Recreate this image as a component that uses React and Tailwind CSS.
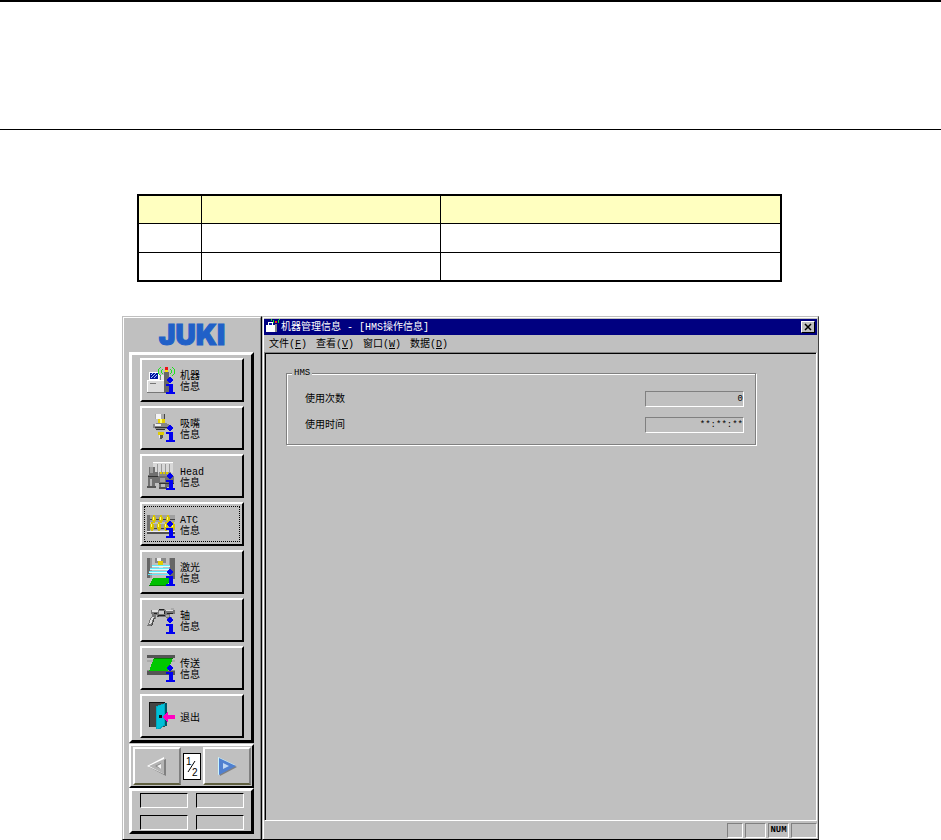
import React from "react";

function InfoMark() {
  return (
    <g fill="#0000f0">
      <path d="M22 11h2v1h1v1h1v2h-1v1h-1v1h-2v-1h-1v-1h-1v-2h1v-1h1z" />
      <path d="M19 18h7v8h2v2h-9v-2h3v-6h-3z" />
    </g>
  );
}

function Icon({ children, info = true }) {
  return (
    <svg
      width="28"
      height="28"
      viewBox="0 0 28 28"
      shapeRendering="crispEdges"
      aria-hidden="true"
      className="shrink-0 overflow-visible"
    >
      {children}
      {info && <InfoMark />}
    </svg>
  );
}

function MachineIcon() {
  return (
    <Icon>
      <path d="M2 6h10v9H2z" fill="#fff" />
      <path d="M3 7h8v6H3z" fill="#0018a0" />
      <path d="M4 12l5-5M4 9l2-2M7 12l3-3" stroke="#a8c0ff" strokeWidth="1" />
      <path d="M12 9h5v5h-5z" fill="#e8e8e8" />
      <path d="M13 10h1v4h-1z" fill="#888" />
      <path d="M0 15h18v12H0z" fill="#dcdcdc" />
      <path d="M0 14h17v1H0zM0 14h1v13H0z" fill="#fff" />
      <path d="M3 17h6v1H3zM0 26h18v1H0z" fill="#777" />
      <path d="M17 6h5v21h-5z" fill="#686868" />
      <path d="M18 4h3v2h-3z" fill="#ffe000" />
      <path d="M18 1h3v3h-3z" fill="#f01010" />
      <path
        d="M15 3h1v1h-1v3h1v1h-1v-1h-1V4h1zM13 1h1v1h-1v1h-1v5h1v1h1v1h-1v-1h-1v-1h-1V3h1V2h1zM23 3h1v1h1v3h-1v1h-1V7h1V4h-1zM25 1h1v1h1v1h1v5h-1v1h-1v1h-1V9h1V8h1V3h-1V2h-1z"
        fill="#20e020"
      />
    </Icon>
  );
}

function NozzleIcon() {
  return (
    <Icon>
      <path d="M8 0h10v5H8z" fill="#aaa" />
      <path d="M9 0h5v5H9z" fill="#f4f4f4" />
      <path d="M17 0h1v6h-1z" fill="#444" />
      <path d="M11 5h7v4h-7z" fill="#e8d000" />
      <path d="M13 5h2v4h-2z" fill="#ffff70" />
      <path d="M6 10h3V9h11v1h2v4h-2v1H8v-1H6z" fill="#888" />
      <path d="M8 10h6v2H8z" fill="#eee" />
      <path d="M8 13h12v1H8zM9 15h9v1H9z" fill="#333" />
      <path d="M9 16h10v1h-2v1h-6v-1H9z" fill="#b8b8b8" />
      <path d="M11 18h6v3h-6z" fill="#e0cc00" />
      <path d="M12 21h4v3h-1v1h-2v-1h-1z" fill="#555" />
      <path d="M12 21h1v3h-1z" fill="#eee" />
    </Icon>
  );
}

function HeadIcon() {
  return (
    <Icon>
      <path d="M6 0h20v11H6z" fill="#d8d8d8" />
      <path d="M6 0h20v1H6z" fill="#fff" />
      <path d="M10 2h1v8h-1zM14 2h1v9h-1zM18 2h1v9h-1zM22 2h1v8h-1z" fill="#999" />
      <path d="M2 5h6v5h3v4h16v7h-3v4H12v-4H8v4H1V13h1z" fill="#707070" />
      <path d="M12 10h12v4H12z" fill="#888" />
      <path d="M13 10h2v2h-2zM16 10h2v2h-2zM19 10h2v2h-2z" fill="#e0cc00" />
      <path d="M3 5h3v6H3zM13 16h5v4h-5z" fill="#a0a0a0" />
      <path d="M1 14h10v1H1zM12 21h15v1H12z" fill="#333" />
      <path d="M3 17h2v7H3zM14 22h4v4h-4z" fill="#b8b8b8" />
      <path d="M0 24h9v2H0zM12 25h8v2h-8z" fill="#555" />
    </Icon>
  );
}

function AtcIcon() {
  const upper = [5, 12, 19];
  const lower = [3, 10, 17, 24];
  return (
    <Icon>
      <path d="M1 5h27v7H1zM0 14h28v6H0z" fill="#a0a0a0" />
      <path d="M1 9h27v1H1zM0 18h28v1H0z" fill="#444" />
      <path d="M0 5h3v19H0z" fill="#707070" />
      <path d="M0 22h28v2H0z" fill="#505050" />
      <path d="M0 21h28v1H0z" fill="#eee" />
      {upper.map((x) => (
        <g key={x} transform={`translate(${x} 5)`}>
          <path d="M1 0h2v2h1v4h-1v2h-2v-2h-1v-4h1z" fill="#d8c400" />
          <path d="M1 2h1v3h-1z" fill="#ffff70" />
        </g>
      ))}
      {lower.map((x) => (
        <g key={x} transform={`translate(${x} 12)`}>
          <path d="M1 0h2v2h1v5h-1v2h-2v-2h-1v-5h1z" fill="#d8c400" />
          <path d="M1 2h1v3h-1z" fill="#ffff70" />
        </g>
      ))}
    </Icon>
  );
}

function LaserIcon() {
  return (
    <Icon>
      <path d="M0 0h5v20H0zM22 0h6v21h-6z" fill="#666" />
      <path d="M3 0h2v20H3zM22 0h1v21h-1z" fill="#999" />
      <path d="M8 0h11v5H8z" fill="#888" />
      <path d="M10 0h4v3h-4z" fill="#eee" />
      <path d="M11 3h5v4h-5z" fill="#e0cc00" />
      <path d="M12 9h4v2h-4z" fill="#ddd" />
      <path d="M5 7h18v1H5zM3 10h19v1H3zM2 13h21v1H2zM1 16h23v1H1z" fill="#60e8f8" />
      <path d="M5 8h18v1H5zM3 11h19v1H3zM2 14h21v1H2z" fill="#d8ffff" />
      <path d="M6 20h18l-4 8H2z" fill="#00c000" />
      <path d="M2 27h19v1H2z" fill="#008000" />
    </Icon>
  );
}

function AxisIcon() {
  return (
    <Icon>
      <path d="M4 4h8V3h6v1h10v4h-5v3h2v3h-3l-4-3h-8v-2H9v4H7l-3 7H0l4-9h1V8H4z" fill="#777" />
      <path d="M5 4h6v2H5zM19 4h7v1h-7zM5 11h2l-3 7H2z" fill="#e0e0e0" />
      <path d="M12 5h5v3h-5z" fill="#ccc" />
      <path d="M12 3h5v1h-5zM11 9h7v1h-7zM20 7h6v1h-6zM7 7h3v1H7zM17 5h1v3h-1z" fill="#222" />
      <path d="M7 12h1l-3 8H4zM10 10h2v1h-2z" fill="#444" />
      <path d="M24 2h3v2h-3zM19 9h3v2h-3z" fill="#aaa" />
    </Icon>
  );
}

function ConveyorIcon() {
  return (
    <Icon>
      <path d="M0 1h28v3H0zM0 17h28v4H0z" fill="#555" />
      <path d="M0 6h28v2H0z" fill="#aaa" />
      <path d="M0 16h28v1H0z" fill="#888" />
      <path d="M7 4h19l-5 13H2z" fill="#00c800" />
      <path d="M7 4h19v1H7z" fill="#008000" />
    </Icon>
  );
}

function ExitIcon() {
  return (
    <Icon info={false}>
      <path d="M2 0h16v25H2z" fill="#444" />
      <path d="M2 0h1v25H2zM2 0h16v1H2z" fill="#111" />
      <path d="M9 4l9-3h2v23h-3l-4 3H9z" fill="#00a8c0" />
      <path d="M10 5l7-3v21l-7 4z" fill="#00c0d8" />
      <path d="M18 1h2v23h-2z" fill="#005868" />
      <path d="M12 13h3v3h-3z" fill="#111" />
      <path d="M15 15l6-6v4h7v4h-7v4z" fill="#ff00c0" />
    </Icon>
  );
}

const sections = [
  { top: "机器", bottom: "信息", Icon: MachineIcon },
  { top: "吸嘴", bottom: "信息", Icon: NozzleIcon },
  { top: "Head", bottom: "信息", Icon: HeadIcon },
  { top: "ATC", bottom: "信息", Icon: AtcIcon, focused: true },
  { top: "激光", bottom: "信息", Icon: LaserIcon },
  { top: "轴", bottom: "信息", Icon: AxisIcon },
  { top: "传送", bottom: "信息", Icon: ConveyorIcon },
  { top: "退出", Icon: ExitIcon },
];

const menus = [
  ["文件", "F"],
  ["查看", "V"],
  ["窗口", "W"],
  ["数据", "D"],
];

function SideButton({ item }) {
  const Glyph = item.Icon;
  return (
    <button
      type="button"
      className="flex h-11 w-full items-stretch border-2 border-t-white border-r-black border-b-black border-l-white bg-[#c0c0c0] p-[2px] text-left"
    >
      <span
        className={
          item.focused
            ? "flex flex-1 items-center gap-[5px] border border-dotted border-black pl-[2px]"
            : "flex flex-1 items-center gap-[5px] border border-transparent pl-[2px]"
        }
      >
        <Glyph />
        <span className="flex flex-col pt-1 text-[10px] leading-[11px]">
          <span>{item.top}</span>
          {item.bottom && <span>{item.bottom}</span>}
        </span>
      </span>
    </button>
  );
}

function Sidebar() {
  return (
    <aside className="w-[140px] shrink-0 border-y border-r border-l border-t-[#c0c0c0] border-r-black border-b-black border-l-[#c0c0c0]">
      <div className="h-full border-t border-r border-l border-t-white border-r-[#808080] border-l-white pr-[6px] pl-[5px]">
        <div className="flex h-[34px] items-center justify-center">
          <svg width="120" height="34" viewBox="0 0 120 34" role="img" aria-label="JUKI">
            <text
              x="60"
              y="27"
              textAnchor="middle"
              fill="#2060c8"
              stroke="#2060c8"
              strokeWidth="1"
              className="font-['Inter',sans-serif] text-[28px] font-black"
            >
              JUKI
            </text>
          </svg>
        </div>
        <nav className="flex flex-col gap-1 border-[3px] border-t-white border-r-black border-b-black border-l-white pt-[3px] pr-[7px] pb-[2px] pl-2">
          {sections.map((item) => (
            <SideButton key={item.top} item={item} />
          ))}
        </nav>
        <div className="mt-px flex h-11 items-center justify-between border-2 border-t-white border-r-black border-b-black border-l-white pr-px pl-[2px]">
          <button
            type="button"
            aria-label="上一页"
            className="flex h-[38px] w-12 items-center justify-center border-2 border-t-white border-r-[#808080] border-b-[#606040] border-l-white bg-[#c0c0c0]"
          >
            <svg width="22" height="22" viewBox="0 0 22 22" aria-hidden="true">
              <path d="M3 12L20 4v17z" fill="#808080" />
              <path d="M1 11L18 2v17z" fill="#fff" />
              <path d="M3 11L18 4v15z" fill="#b4b4b4" />
              <path d="M9 11l6-3v6z" fill="#888" />
              <path d="M11 11l4-2v5z" fill="#f4f4f4" />
            </svg>
          </button>
          <span className="flex h-[27px] w-[18px] items-center justify-center border border-black bg-white">
            <svg width="16" height="25" viewBox="0 0 16 25" role="img" aria-label="1/2">
              <path d="M11 7L4 18" stroke="#000" />
              <text x="2" y="11" className="font-['Liberation_Sans',sans-serif] text-[10px]">1</text>
              <text x="8" y="22" className="font-['Liberation_Sans',sans-serif] text-[10px]">2</text>
            </svg>
          </span>
          <button
            type="button"
            aria-label="下一页"
            className="flex h-[38px] w-12 items-center justify-center border-2 border-t-white border-r-[#808080] border-b-[#606040] border-l-white bg-[#c0c0c0]"
          >
            <svg width="22" height="22" viewBox="0 0 22 22" aria-hidden="true">
              <path d="M4 4l17 8-17 9z" fill="#808080" />
              <path d="M2 2l17 8-17 10z" fill="#c8f4ff" />
              <path d="M3 3l17 8-17 9z" fill="#5080d0" />
              <path d="M7 8l6 3-6 3z" fill="#c0d8f4" />
            </svg>
          </button>
        </div>
        <div className="grid h-[46px] grid-cols-2 content-start gap-x-2 gap-y-[7px] border-[3px] border-t-white border-r-black border-b-black border-l-white pt-[2px] pr-[7px] pl-2">
          {[0, 1, 2, 3].map((n) => (
            <span
              key={n}
              className="h-[15px] border border-t-black border-r-white border-b-white border-l-black"
            />
          ))}
        </div>
      </div>
    </aside>
  );
}

function Field({ id, label, value }) {
  return (
    <div className="flex items-center justify-between">
      <label htmlFor={id} className="pt-[2px]">
        {label}
      </label>
      <input
        id={id}
        readOnly
        value={value}
        className="h-4 w-[99px] border border-t-[#808080] border-r-white border-b-white border-l-[#808080] bg-[#c0c0c0] text-right font-['Liberation_Mono',monospace] text-[9px] leading-[14px] outline-none"
      />
    </div>
  );
}

function MachineWindow() {
  return (
    <main className="flex min-w-0 flex-1 flex-col border border-t-[#c0c0c0] border-r-[#404040] border-b-black border-l-[#c0c0c0]">
      <div className="flex flex-1 flex-col border-t border-r border-l border-t-white border-r-[#c0c0c0] border-l-white pt-px">
        <header className="flex h-4 items-center bg-[#000080] pr-[2px] text-white">
          <svg width="17" height="16" viewBox="0 0 17 16" shapeRendering="crispEdges" aria-hidden="true">
            <path d="M2 6h9v7H2zM4 3h5v4H4z" fill="#fff" />
            <path d="M5 4h3v2H5z" fill="#0018a0" />
            <path d="M11 5h2v8h-2z" fill="#888" />
            <path d="M11 2h2v2h-2z" fill="#f02020" />
            <path d="M9 1h1v3H9zM14 1h1v3h-1zM7 0h1v2H7zM15 0h1v1h-1z" fill="#20e020" />
          </svg>
          <h1 className="flex-1 pt-[2px] whitespace-pre">机器管理信息 - [HMS操作信息]</h1>
          <button
            type="button"
            aria-label="关闭"
            className="flex h-3 w-[14px] items-center justify-center border border-t-white border-r-black border-b-black border-l-white bg-[#c0c0c0]"
          >
            <svg width="8" height="8" viewBox="0 0 8 8" aria-hidden="true">
              <path d="M1 1l6 6M7 1L1 7" stroke="#000" strokeWidth="1.5" />
            </svg>
          </button>
        </header>
        <div className="flex h-[17px] items-center pt-[2px] pl-[5px]">
          {menus.map(([name, key]) => (
            <button type="button" key={key} className="w-[47px] text-left whitespace-nowrap">
              {name}(<u>{key}</u>)
            </button>
          ))}
        </div>
        <section className="flex-1 border border-t-[#808080] border-r-white border-b-white border-l-[#808080]">
          <div className="h-full border-t border-l border-black pt-[14px] pr-[60px] pl-5">
            <fieldset className="border border-[#808080] pr-[11px] pb-[11px] pl-[18px] shadow-[1px_1px_0_#fff,inset_1px_1px_0_#fff]">
              <legend className="-ml-[13px] bg-[#c0c0c0] px-[2px] font-['Liberation_Mono',monospace] text-[9px] leading-[10px]">
                HMS
              </legend>
              <div className="flex flex-col gap-[10px] pt-[13px]">
                <Field id="use-count" label="使用次数" value="0" />
                <Field id="use-time" label="使用时间" value="**:**:**" />
              </div>
            </fieldset>
          </div>
        </section>
        <footer className="flex h-[18px] items-start justify-end gap-[2px] pt-[2px] font-['Liberation_Mono',monospace] text-[9px] leading-[13px]">
          <span className="h-[15px] w-4 border border-t-[#808080] border-r-white border-b-white border-l-[#808080]" />
          <span className="h-[15px] w-[21px] border border-t-[#808080] border-r-white border-b-white border-l-[#808080]" />
          <span className="h-[15px] w-[21px] border border-t-[#808080] border-r-white border-b-white border-l-[#808080] text-center font-bold">
            NUM
          </span>
          <span className="h-[15px] w-[26px] border border-t-[#808080] border-r-white border-b-white border-l-[#808080]" />
        </footer>
      </div>
    </main>
  );
}

export default function App() {
  return (
    <div className="bg-white">
      <div className="h-[130px] border-t-2 border-b border-black" />
      <div className="pt-16 pr-[159px] pl-[137px]">
        <table className="w-full table-fixed border-separate border-spacing-0 border-2 border-black">
          <colgroup>
            <col className="w-[63px]" />
            <col className="w-[239px]" />
            <col />
          </colgroup>
          <thead>
            <tr className="h-[28px] bg-[#ffffc0]">
              <th className="border-r border-b border-black" />
              <th className="border-r border-b border-black" />
              <th className="border-b border-black" />
            </tr>
          </thead>
          <tbody>
            <tr className="h-[29px]">
              <td className="border-r border-b border-black" />
              <td className="border-r border-b border-black" />
              <td className="border-b border-black" />
            </tr>
            <tr className="h-[27px]">
              <td className="border-r border-black" />
              <td className="border-r border-black" />
              <td />
            </tr>
          </tbody>
        </table>
      </div>
      <div className="mx-[122px] mt-[34px] flex h-[524px] bg-[#c0c0c0] font-['Liberation_Mono','Noto_Sans_CJK_SC',monospace] text-[10px] leading-[14px] text-black">
        <Sidebar />
        <MachineWindow />
      </div>
    </div>
  );
}
